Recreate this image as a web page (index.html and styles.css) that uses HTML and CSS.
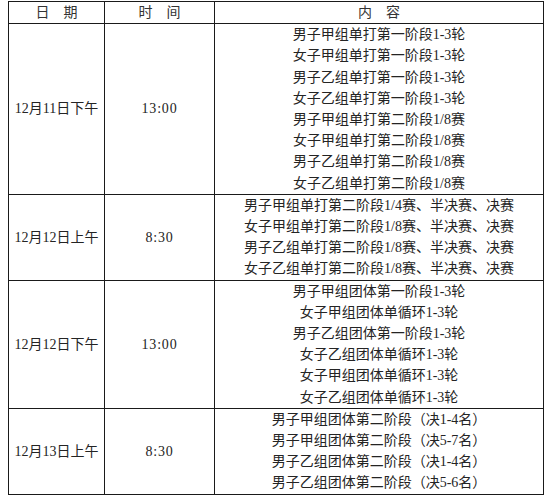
FILE: index.html
```html
<!DOCTYPE html>
<html lang="zh-CN">
<head>
<meta charset="utf-8">
<title>赛程</title>
<link rel="stylesheet" href="styles.css">
</head>
<body>
<table class="schedule">
  <colgroup>
    <col class="c-date">
    <col class="c-time">
    <col class="c-content">
  </colgroup>
  <thead>
    <tr>
      <th>日　期</th>
      <th>时　间</th>
      <th>内　容</th>
    </tr>
  </thead>
  <tbody>
    <tr>
      <td class="date">12月11日下午</td>
      <td class="time">13:00</td>
      <td class="content">
        <div>男子甲组单打第一阶段1-3轮</div>
        <div>女子甲组单打第一阶段1-3轮</div>
        <div>男子乙组单打第一阶段1-3轮</div>
        <div>女子乙组单打第一阶段1-3轮</div>
        <div>男子甲组单打第二阶段1/8赛</div>
        <div>女子甲组单打第二阶段1/8赛</div>
        <div>男子乙组单打第二阶段1/8赛</div>
        <div>女子乙组单打第二阶段1/8赛</div>
      </td>
    </tr>
    <tr>
      <td class="date">12月12日上午</td>
      <td class="time">8:30</td>
      <td class="content">
        <div>男子甲组单打第二阶段1/4赛、半决赛、决赛</div>
        <div>女子甲组单打第二阶段1/8赛、半决赛、决赛</div>
        <div>男子乙组单打第二阶段1/8赛、半决赛、决赛</div>
        <div>女子乙组单打第二阶段1/8赛、半决赛、决赛</div>
      </td>
    </tr>
    <tr>
      <td class="date">12月12日下午</td>
      <td class="time">13:00</td>
      <td class="content">
        <div>男子甲组团体第一阶段1-3轮</div>
        <div>女子甲组团体单循环1-3轮</div>
        <div>男子乙组团体第一阶段1-3轮</div>
        <div>女子乙组团体单循环1-3轮</div>
        <div>女子甲组团体单循环1-3轮</div>
        <div>女子乙组团体单循环1-3轮</div>
      </td>
    </tr>
    <tr>
      <td class="date">12月13日上午</td>
      <td class="time">8:30</td>
      <td class="content">
        <div>男子甲组团体第二阶段（决1-4名）</div>
        <div>男子甲组团体第二阶段（决5-7名）</div>
        <div>男子乙组团体第二阶段（决1-4名）</div>
        <div>男子乙组团体第二阶段（决5-6名）</div>
      </td>
    </tr>
  </tbody>
</table>
</body>
</html>
```
FILE: styles.css
```css
html, body {
  background: #ffffff;
}
body {
  margin: 1px 0 0 8px;
  font-family: "Liberation Serif", "Noto Sans CJK SC", serif;
  font-size: 14px;
  color: #242424;
}
.schedule {
  border-collapse: collapse;
  table-layout: fixed;
  width: 535px;
  border: 1px solid #1a1a1a;
}
.c-date { width: 96px; }
.c-time { width: 110px; }
.c-content { width: 329px; }
.schedule th,
.schedule td {
  border: 1px solid #1a1a1a;
  padding: 0;
  text-align: center;
  vertical-align: middle;
  line-height: 21.2px;
  font-weight: normal;
}
.schedule th {
  color: #333333;
}
.date {
  white-space: nowrap;
}
.time {
  letter-spacing: 0.8px;
}
.content div {
  white-space: nowrap;
}
```
